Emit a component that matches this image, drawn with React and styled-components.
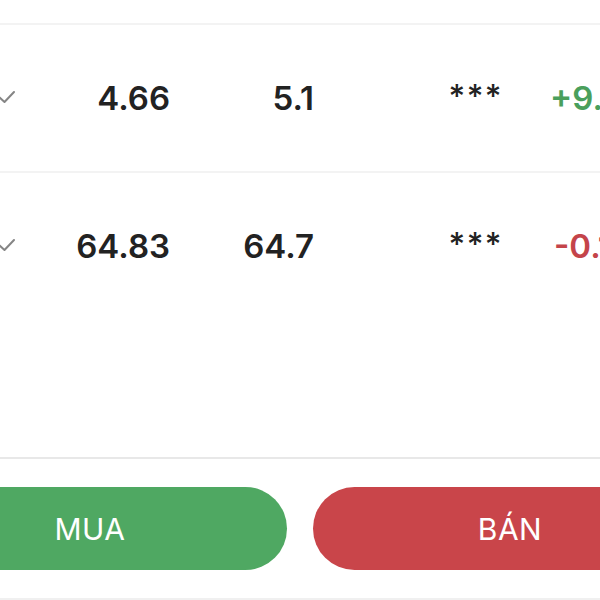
import styled, { createGlobalStyle } from "styled-components";

const GlobalStyle = createGlobalStyle`
  html, body {
    margin: 0;
    padding: 0;
    background: #fff;
    overflow: hidden;
  }
  body {
    font-family: Inter, "Noto Sans", "Liberation Sans", sans-serif;
  }
`;

const Page = styled.div`
  width: 600px;
  height: 600px;
  overflow: hidden;
  padding-top: 23px;
  box-sizing: border-box;
`;

const List = styled.div`
  height: 432px;
  border-top: 2px solid #f3f3f3;
  border-bottom: 2px solid #e8e8e8;
`;

const Row = styled.div`
  display: grid;
  grid-template-columns: 20px 150px 144px 189px 1fr;
  align-items: center;
  height: 146px;
  border-bottom: ${(p) => (p.$last ? "none" : "2px solid #f3f3f3")};
  font-size: 33px;
  font-weight: 600;
  color: #222;
  white-space: nowrap;
`;

const Check = styled.div`
  display: flex;
  align-items: center;
  margin-left: -2px;
  margin-top: -2px;
`;

const Num = styled.div`
  text-align: right;
`;

const Hidden = styled.div`
  text-align: right;
  font-weight: 500;
  font-size: 32px;
  letter-spacing: 1.5px;
  transform: translateY(-2px);
`;

const Change = styled.div`
  padding-left: ${(p) => (p.$up ? "47px" : "51px")};
  color: ${(p) => (p.$up ? "#4a9f5c" : "#c4444a")};
  overflow: hidden;
`;

const Actions = styled.div`
  height: 141px;
  border-bottom: 2px solid #f0f0f0;
  box-sizing: border-box;
  display: flex;
  align-items: center;
  gap: 26px;
  margin-left: -107px;
`;

const TradeButton = styled.button`
  flex: 0 0 394px;
  height: 83px;
  border: none;
  border-radius: 42px;
  background: ${(p) => (p.$buy ? "#4fa862" : "#c9454a")};
  color: #fff;
  font-family: Inter, "Noto Sans", sans-serif;
  font-size: 30px;
  font-weight: 400;
  letter-spacing: 0.5px;
`;

const CheckIcon = () => (
  <svg width="18" height="16" viewBox="0 0 18 16">
    <path
      d="M1 8 L6.5 13 L16 3"
      fill="none"
      stroke="#858585"
      strokeWidth="2"
      strokeLinecap="round"
      strokeLinejoin="round"
    />
  </svg>
);

const rows = [
  { buy: "4.66", sell: "5.1", change: "+9.58%", up: true },
  { buy: "64.83", sell: "64.7", change: "-0.15%", up: false },
];

export default function App() {
  return (
    <>
      <GlobalStyle />
      <Page>
        <List>
          {rows.map((r, i) => (
            <Row key={i} $last={i === rows.length - 1}>
              <Check>
                <CheckIcon />
              </Check>
              <Num>{r.buy}</Num>
              <Num>{r.sell}</Num>
              <Hidden>***</Hidden>
              <Change $up={r.up}>{r.change}</Change>
            </Row>
          ))}
        </List>
        <Actions>
          <TradeButton $buy>MUA</TradeButton>
          <TradeButton>BÁN</TradeButton>
        </Actions>
      </Page>
    </>
  );
}
